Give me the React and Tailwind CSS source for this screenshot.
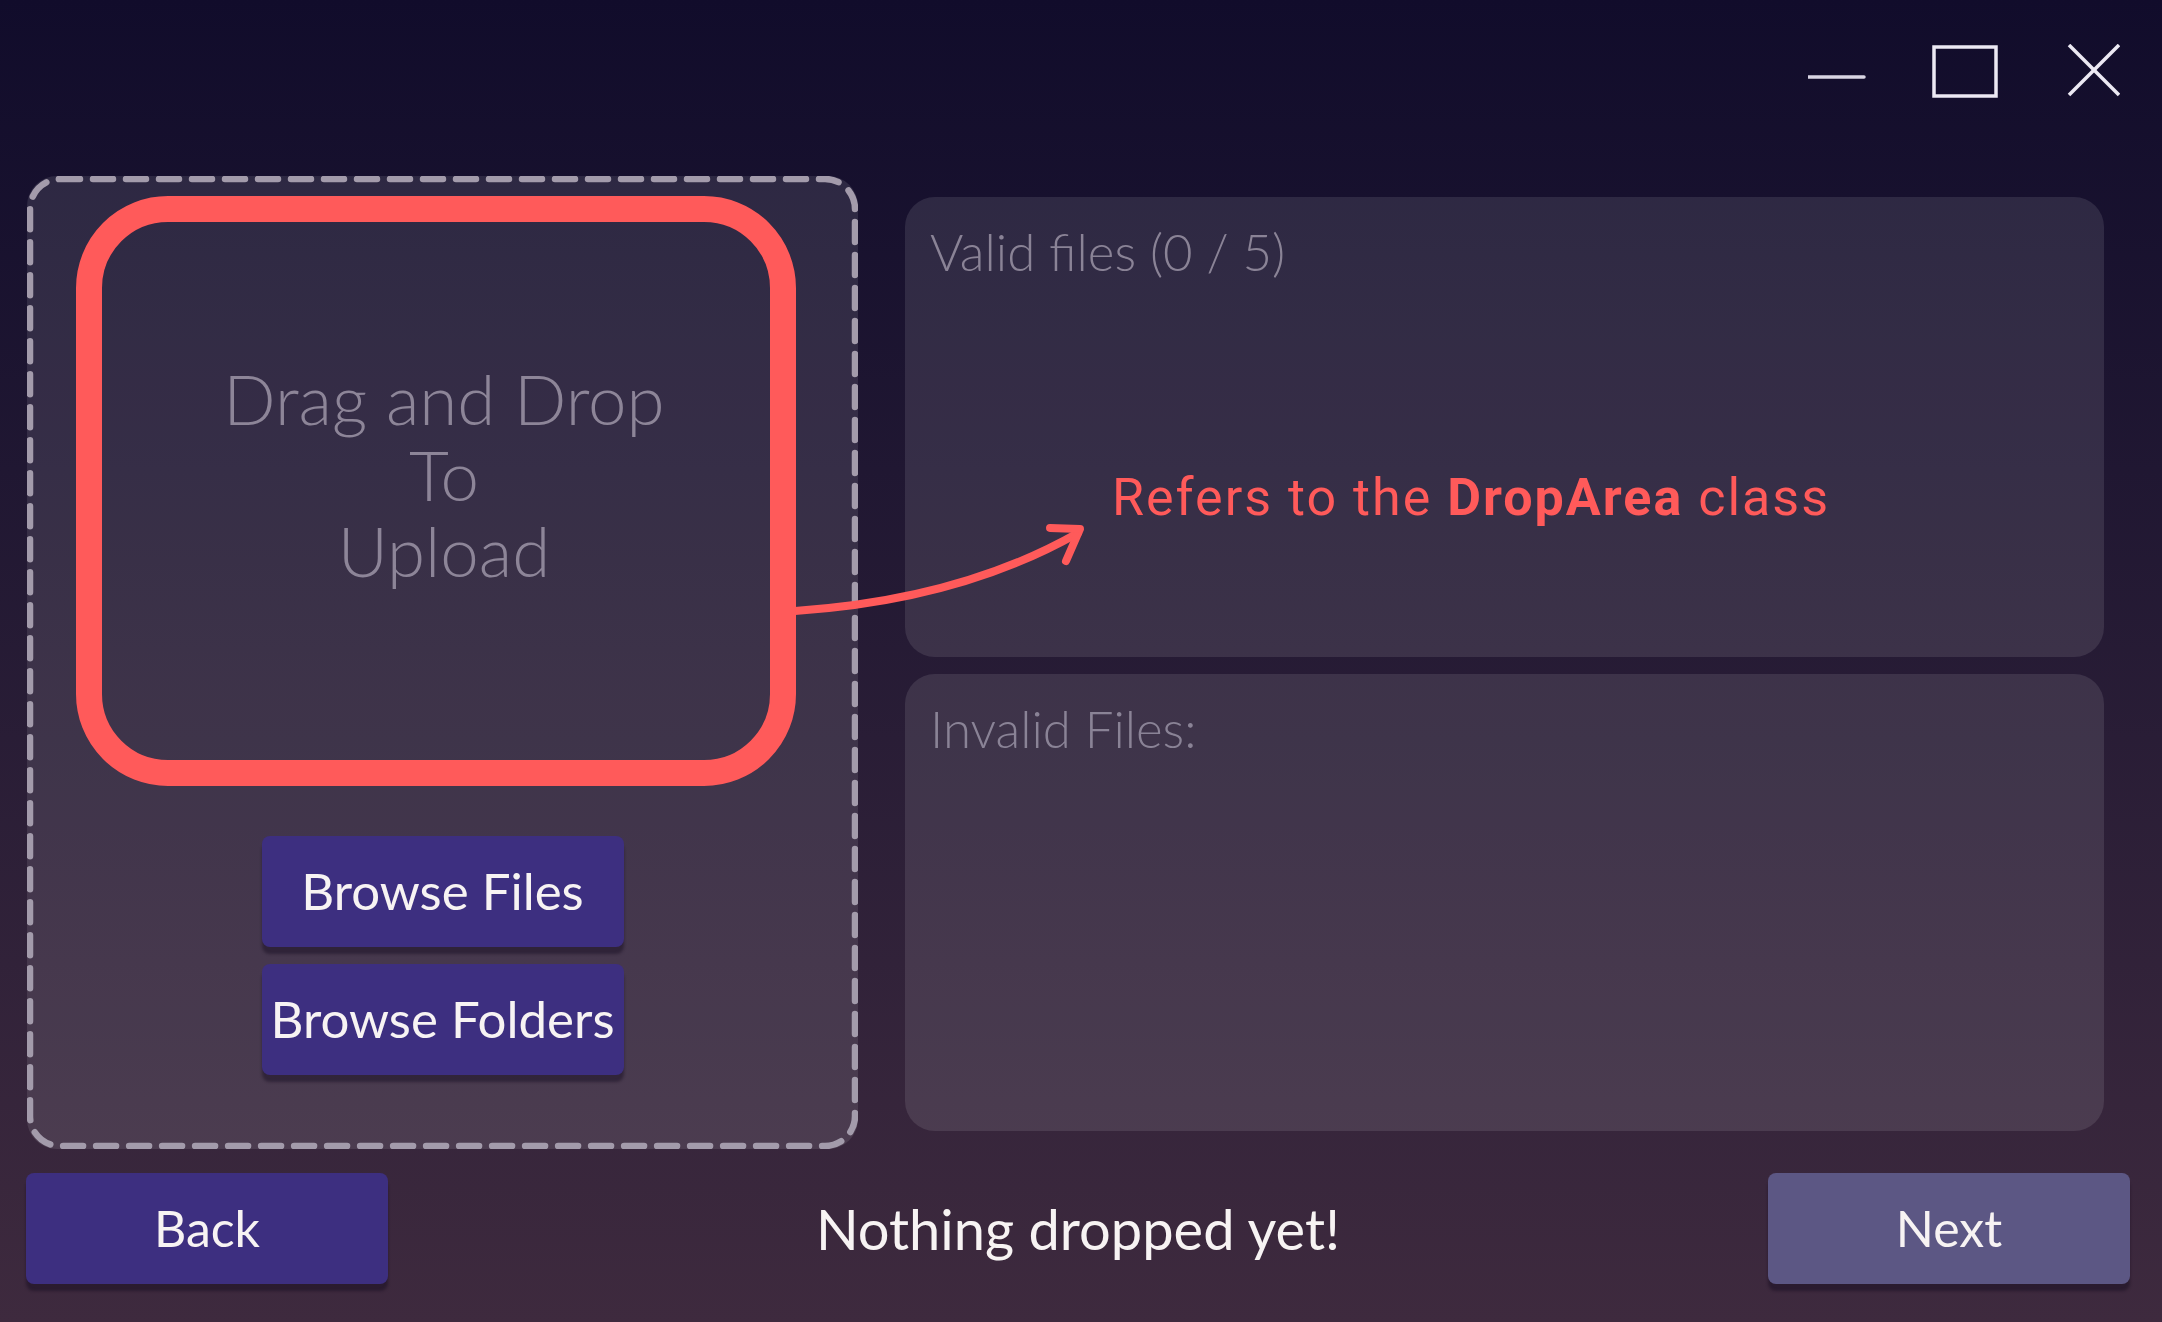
const ubuntuish = { fontFamily: "Lato, 'Noto Sans', sans-serif" };

function WindowControls() {
  return (
    <div className="flex h-[176px] items-start justify-end pr-[42px] pt-[44px]">
      <svg width="312" height="54" viewBox="0 0 312 54" fill="none" stroke="#ece9f3" strokeWidth="3.5">
        <line x1="0" y1="33" x2="56" y2="33" strokeLinecap="round" stroke="#d9d5e3" />
        <rect x="126" y="3" width="62" height="49" />
        <line x1="261" y1="1" x2="311" y2="51" />
        <line x1="311" y1="1" x2="261" y2="51" />
      </svg>
    </div>
  );
}

function PurpleButton({ children, muted = false, className = "" }) {
  return (
    <button
      className={`flex h-[111px] w-[362px] items-center justify-center rounded-[8px] text-[50px] text-[#f7f3f3] shadow-[0_7px_3px_rgba(20,12,30,0.45)] ${
        muted ? "bg-[#5c5784]" : "bg-[#3d2f80]"
      } ${className}`}
      style={ubuntuish}
    >
      {children}
    </button>
  );
}

function DropPanel() {
  return (
    <div className="relative flex h-[973px] w-[831px] shrink-0 flex-col rounded-[30px] bg-white/10">
      <svg className="pointer-events-none absolute inset-0" width="831" height="973">
        <rect
          x="3"
          y="3"
          width="825"
          height="967"
          rx="30"
          fill="none"
          stroke="#a39bab"
          strokeWidth="6.5"
          strokeDasharray="20 13"
          strokeLinecap="round"
        />
      </svg>
      <div className="ml-[49px] mt-[20px] flex h-[590px] w-[720px] flex-col items-center justify-center rounded-[92px] border-[26px] border-[#ff5a5a] pb-[32px] pl-[16px]">
        <div
          className="text-center text-[69px] font-light leading-[76px] text-[#8d8598]"
          style={ubuntuish}
        >
          <div>Drag and Drop</div>
          <div>To</div>
          <div>Upload</div>
        </div>
      </div>
      <div className="mt-[50px] flex flex-col items-center gap-[17px]">
        <button
          className="flex h-[111px] w-[362px] items-center justify-center rounded-[8px] bg-[#3d2f80] text-[51px] text-[#f7f3f3] shadow-[0_7px_3px_rgba(20,12,30,0.45)]"
          style={ubuntuish}
        >
          Browse Files
        </button>
        <button
          className="flex h-[111px] w-[362px] items-center justify-center rounded-[8px] bg-[#3d2f80] text-[51px] text-[#f7f3f3] shadow-[0_7px_3px_rgba(20,12,30,0.45)]"
          style={ubuntuish}
        >
          Browse Folders
        </button>
      </div>
    </div>
  );
}

function FileList({ title, height }) {
  return (
    <div className={`rounded-[30px] bg-white/10 px-[25px] pt-[26px] ${height}`}>
      <div className="text-[51px] font-light leading-[58px] text-[#8a8396]" style={ubuntuish}>
        {title}
      </div>
    </div>
  );
}

export default function App() {
  return (
    <div className="relative flex h-[1322px] w-full flex-col overflow-hidden bg-gradient-to-b from-[#110c2b] to-[#3e2a3e]">
      <WindowControls />

      <div className="flex items-start gap-[47px] pl-[27px]">
        <DropPanel />
        <div className="mt-[21px] flex w-[1199px] flex-col gap-[17px]">
          <FileList title="Valid files (0 / 5)" height="h-[460px]" />
          <FileList title="Invalid Files:" height="h-[457px]" />
        </div>
      </div>

      <div className="mt-[24px] flex items-center justify-between pl-[26px] pr-[32px]">
        <PurpleButton>Back</PurpleButton>
        <div className="text-[56px] text-[#f7f3f3]" style={ubuntuish}>
          Nothing dropped yet!
        </div>
        <PurpleButton muted>Next</PurpleButton>
      </div>

      {/* annotation overlay */}
      <svg
        className="pointer-events-none absolute left-[780px] top-[500px]"
        width="320"
        height="130"
        fill="none"
        stroke="#ff5a5a"
        strokeWidth="8"
        strokeLinecap="round"
      >
        <path d="M15 111 Q 180 100 298 33" />
        <path d="M270 28 L300 29 L286 61" strokeLinejoin="round" />
      </svg>
      <div
        className="absolute left-[1112px] top-[464px] text-[52px] leading-[68px] tracking-[2px] text-[#ff5a5a]"
        style={{ fontFamily: "Roboto, 'Noto Sans', sans-serif" }}
      >
        Refers to the <span className="font-bold">DropArea</span> class
      </div>
    </div>
  );
}
